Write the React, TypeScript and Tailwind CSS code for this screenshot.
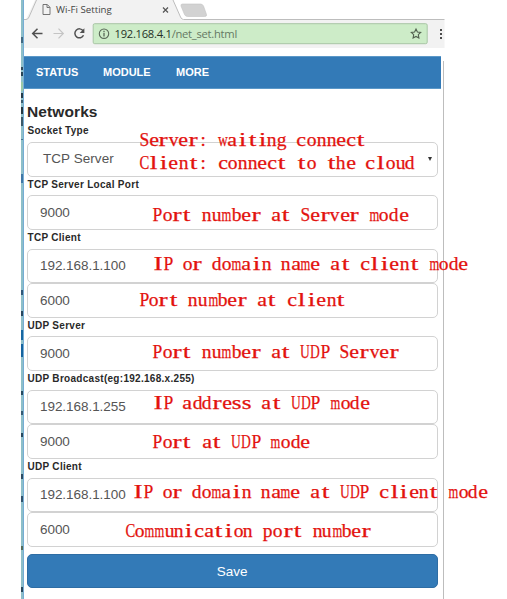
import React from "react";

// Advance widths of the note typeface, in em.
const ADVANCE: Record<string, number> = {
  S: 0.556, C: 0.667, P: 0.556, I: 0.333, U: 0.722, D: 0.722,
  a: 0.444, b: 0.5, c: 0.444, d: 0.5, e: 0.444, g: 0.5, h: 0.5, i: 0.278,
  l: 0.278, m: 0.778, n: 0.5, o: 0.5, p: 0.5, r: 0.333, s: 0.389, t: 0.278,
  u: 0.5, v: 0.5, w: 0.722, ":": 0.278, " ": 0.25,
};
const SIZE = 19;
const CELL = 9.86;

// Widens narrow letters and condenses wide ones, as a fixed-pitch face does.
function stretch(letter: string) {
  if (letter === ":") return 1;
  const width = (ADVANCE[letter] ?? 0.5) * SIZE;
  return Math.min(1.45, (CELL * 0.99) / width);
}

function Note({ text, place }: { text: string; place: string }) {
  return (
    <div className={`absolute flex whitespace-pre font-['Liberation_Serif',serif] text-[19px] leading-[22px] text-[#e3120e] [-webkit-text-stroke:0.25px_#e3120e] ${place}`}>
      {Array.from(text).map((letter, i) => (
        <span key={i} className="flex w-[9.86px] shrink-0 justify-center">
          <span className="shrink-0" style={{ transform: `scaleX(${stretch(letter)})` }}>{letter}</span>
        </span>
      ))}
    </div>
  );
}

function Label({ children }: { children: React.ReactNode }) {
  return <div className="h-[18.7px] whitespace-nowrap pl-[0.5px] text-[10px] font-bold leading-[16px] tracking-[0.29px] text-[#292929]">{children}</div>;
}

function Field({ value, note, place }: { value: string; note: string; place: string }) {
  return (
    <div className="relative flex h-[34.6px] items-center rounded-[5px] border border-[#d2d2d2] pl-[12px] pt-px text-[13.5px] text-[#555]">
      <span className="tracking-[-0.05px]">{value}</span>
      <Note text={note} place={place} />
    </div>
  );
}

const SPECKS = [
  [37, 6, "#41687f"], [67, 3, "#31495a"], [72, 4, "#284455"], [82, 9, "#9bc9a6"], [93, 5, "#253b48"],
  [100, 3, "#3a5b6c"], [107, 7, "#263842"], [117, 9, "#3b5868"], [139, 1, "#47748e"], [174, 9, "#3f77a5"],
  [290, 5, "#315777"], [311, 5, "#28465c"], [330, 10, "#1767a1"], [344, 13, "#15639e"], [391, 4, "#26485d"],
  [411, 4, "#355971"], [433, 4, "#28475b"], [474, 5, "#2d4c62"], [496, 6, "#31526b"], [546, 4, "#536b58"], [587, 5, "#28475b"],
] as const;

export default function App() {
  return (
    <div className="relative flex h-[599px] w-[507px] overflow-hidden bg-white font-['Liberation_Sans',Arial,sans-serif]">
      <div className="relative ml-[21px] w-[2.5px] shrink-0 border-r border-[#76add5] bg-[#8ebfc8]">
        {SPECKS.map(([top, height, background]) => (
          <i key={top} className="absolute left-0 w-[1.5px]" style={{ top, height, background }} />
        ))}
      </div>
      <div className="flex w-[420.5px] shrink-0 flex-col">
        <header className="relative h-[48px] shrink-0 border-b border-[#c6c6c6]">
          <svg className="absolute inset-0" width="421" height="48" viewBox="23.5 0 421 48" fill="none">
            <path d="M23.5 20H444V48H23.5Z" fill="#f2f2f2" />
            <path d="M25 20.5 34.5 0H172.5L181.5 20.5Z" fill="#f2f2f2" />
            <path d="M23.5 19.5H25.5Q27.5 19.5 28.5 17L36 0M172.5 0 180 17Q181 19.5 183 19.5H444" stroke="#bdbdbd" />
            <path d="M182 4H200Q202 4 203 6L206 14.5Q206.500 16.500 204 16.500H187Q185 16.500 184 14.500L180.500 6Q180 4 182 4Z" fill="#d2d2d2" stroke="#c2c2c2" strokeWidth=".6" />
            <path d="M42.500 4.500H46.800L49.500 7.300V14.500H42.500ZM46.500 4.800V7.500H49.300" stroke="#666" strokeWidth=".9" />
            <path d="m162.500 7.500 5 5m0-5-5 5" stroke="#555" strokeWidth="1.200" />
            <path d="M42 33.500H32.500M37 28.700 32.200 33.500 37 38.300" stroke="#505050" strokeWidth="1.500" />
            <path d="M53 33.500H62.500M58 28.700 62.800 33.500 58 38.300" stroke="#c4c4c4" strokeWidth="1.200" />
            <path d="M82.600 30.800A4.500 4.500 0 1 0 83 35.200" stroke="#505050" strokeWidth="1.500" />
            <path d="M83.900 28.300V33H79.200Z" fill="#505050" />
            <rect x="92.700" y="23.700" width="334" height="20" rx="1.500" fill="#cdecc8" stroke="#a9c6a5" />
            <circle cx="103.500" cy="33.700" r="4.700" stroke="#5a6858" strokeWidth="1.100" />
            <path d="M103.500 32.800V36.500M103.500 30.700V31.900" stroke="#4f5d4e" strokeWidth="1.200" />
            <path d="m415.500 29 1.400 3 3.300.4-2.400 2.300.6 3.300-2.900-1.600-2.900 1.600.6-3.300-2.400-2.300 3.300-.4Z" stroke="#52604f" strokeWidth="1.100" />
            <path d="M439.500 29h2v2h-2zM439.500 33h2v2h-2zM439.500 37h2v2h-2z" fill="#4b4b4b" />
          </svg>
          <span className="absolute left-[32.500px] top-[2px] whitespace-nowrap font-['Open_Sans',sans-serif] text-[9.700px] leading-[15px] text-[#444]">Wi-Fi Setting</span>
          <span className="absolute left-[91px] top-[25px] whitespace-nowrap font-['Open_Sans',sans-serif] text-[11.200px] leading-[17px] tracking-[-0.260px] text-[#263126]">192.168.4.1<span className="text-[#667964]">/net_set.html</span></span>
        </header>
        <div className="flex grow">
          <main className="w-[417.500px] pt-[8px]">
            <nav className="flex h-[33px] items-center border-y border-[#5b98c8] bg-[#337ab7] text-[11px] font-bold text-white">
              <span className="w-[67px] pl-[12.500px]">STATUS</span>
              <span className="w-[73px] pl-[12.500px]">MODULE</span>
              <span className="pl-[12.500px]">MORE</span>
            </nav>
            <form className="pl-[3.500px] pr-[3.500px] pt-[14px]">
              <h1 className="h-[20.300px] text-[15.500px] font-bold leading-[18px] tracking-[0.100px] text-[#292929]">Networks</h1>
              <Label>Socket Type</Label>
              <div className="relative flex h-[34.600px] items-center justify-between rounded-[5px] border border-[#d2d2d2] pl-[15px] pr-[4.500px] text-[13.500px] text-[#555]">
                <span className="tracking-[0.050px]">TCP Server</span>
                <svg width="4" height="5" viewBox="0 0 4 5"><path d="M0 0H4L2 4Z" fill="#333" /></svg>
                <Note text="Server: waiting connect" place="left-[111px] top-[-14px]" />
                <Note text="Client: connect to the cloud" place="left-[111px] top-[9px]" />
              </div>
              <Label>TCP Server Local Port</Label>
              <Field value="9000" note="Port number at Server mode" place="left-[124.500px] top-[8px]" />
              <Label>TCP Client</Label>
              <Field value="192.168.1.100" note="IP or domain name at client mode" place="left-[125px] top-[3px]" />
              <Field value="6000" note="Port number at client" place="left-[111px] top-[5px]" />
              <Label>UDP Server</Label>
              <Field value="9000" note="Port number at UDP Server" place="left-[124.500px] top-[4px]" />
              <Label>UDP Broadcast(eg:192.168.x.255)</Label>
              <Field value="192.168.1.255" note="IP address at UDP mode" place="left-[125px] top-[1px]" />
              <Field value="9000" note="Port at UDP mode" place="left-[124.500px] top-[6px]" />
              <Label>UDP Client</Label>
              <Field value="192.168.1.100" note="IP or domain name at UDP client mode" place="left-[105px] top-[2px]" />
              <Field value="6000" note="Communication port number" place="left-[97px] top-[7px]" />
              <button type="button" className="mt-[7.200px] flex h-[34.500px] w-full items-center justify-center rounded-[5px] border border-[#2e6da4] bg-[#337ab7] pt-px text-[13.500px] text-white">Save</button>
            </form>
          </main>
          <div className="mt-[13px] ml-[1.500px] w-[1.500px] bg-[#bdbdbd]" />
        </div>
      </div>
    </div>
  );
}
